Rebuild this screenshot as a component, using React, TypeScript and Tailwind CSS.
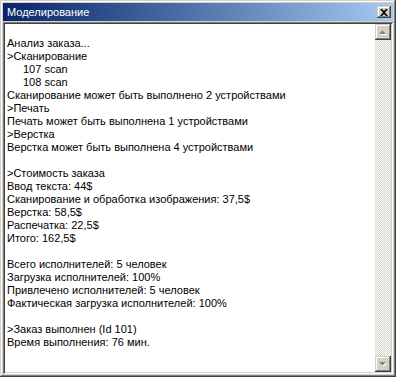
const LINES: { text: string; indent?: boolean }[] = [
  { text: "" },
  { text: "Анализ заказа..." },
  { text: ">Сканирование" },
  { text: "107 scan", indent: true },
  { text: "108 scan", indent: true },
  { text: "Сканирование может быть выполнено 2 устройствами" },
  { text: ">Печать" },
  { text: "Печать может быть выполнена 1 устройствами" },
  { text: ">Верстка" },
  { text: "Верстка может быть выполнена 4 устройствами" },
  { text: "" },
  { text: ">Стоимость заказа" },
  { text: "Ввод текста: 44$" },
  { text: "Сканирование и обработка изображения: 37,5$" },
  { text: "Верстка: 58,5$" },
  { text: "Распечатка: 22,5$" },
  { text: "Итого: 162,5$" },
  { text: "" },
  { text: "Всего исполнителей: 5 человек" },
  { text: "Загрузка исполнителей: 100%" },
  { text: "Привлечено исполнителей: 5 человек" },
  { text: "Фактическая загрузка исполнителей: 100%" },
  { text: "" },
  { text: ">Заказ выполнен (Id 101)" },
  { text: "Время выполнения: 76 мин." },
];

const raised =
  "shadow-[inset_-1px_-1px_#404040,inset_1px_1px_#d4d0c8,inset_-2px_-2px_#808080,inset_2px_2px_#ffffff]";

function ScrollButton({ dir }: { dir: "up" | "down" }) {
  const pts = dir === "up" ? "4,10 11,10 7.5,6.5" : "4,6 11,6 7.5,9.5";
  return (
    <div className={`flex h-[16px] w-[16px] items-center justify-center bg-[#d4d0c8] ${raised}`}>
      <svg width="16" height="16" viewBox="0 0 16 16" aria-hidden>
        <polygon points={pts} fill="#ffffff" transform="translate(1 1)" />
        <polygon points={pts} fill="#808080" />
      </svg>
    </div>
  );
}

export default function App() {
  return (
    <div
      className={`flex h-[377px] w-[396px] flex-col bg-[#d4d0c8] p-[3px] ${raised}`}
      style={{ fontFamily: '"Liberation Sans", Arial, sans-serif' }}
    >
      {/* заголовок окна */}
      <div className="flex h-[18px] shrink-0 items-center justify-between bg-gradient-to-r from-[#0a246a] to-[#a6caf0] pl-[4px] pr-[2px]">
        <span className="text-[11px] leading-none text-white">Моделирование</span>
        <button
          type="button"
          className={`flex h-[12px] w-[14px] items-center justify-center bg-[#d4d0c8] ${raised}`}
        >
          <svg width="8" height="7" viewBox="0 0 8 7" aria-hidden>
            <path d="M0 0h2l2 2 2-2h2L5 3.5 8 7H6L4 5 2 7H0l3-3.5z" fill="#000" />
          </svg>
        </button>
      </div>

      {/* лог */}
      <div className="mt-[1px] flex min-h-0 flex-1 bg-white p-[2px] shadow-[inset_1px_1px_#808080,inset_-1px_-1px_#ffffff,inset_2px_2px_#404040,inset_-2px_-2px_#d4d0c8]">
        <div className="min-w-0 flex-1 overflow-hidden pl-[2px] text-[11px] leading-[13px] text-black">
          {LINES.map((l, i) => (
            <div key={i} className={`h-[13px] whitespace-pre ${l.indent ? "pl-[16px]" : ""}`}>
              {l.text}
            </div>
          ))}
        </div>
        <div className="flex w-[16px] shrink-0 flex-col">
          <ScrollButton dir="up" />
          <div className="flex-1 bg-[conic-gradient(#ffffff_25%,#d4d0c8_0_50%,#ffffff_0_75%,#d4d0c8_0)] bg-[length:2px_2px]" />
          <ScrollButton dir="down" />
        </div>
      </div>
    </div>
  );
}
